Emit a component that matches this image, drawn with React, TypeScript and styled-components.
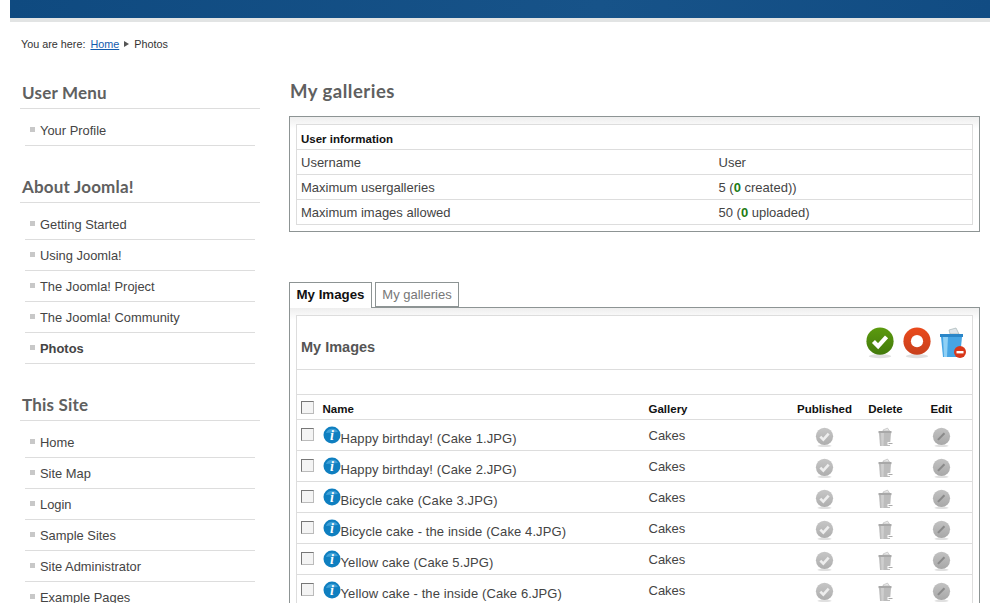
import React from 'react';
import styled, { createGlobalStyle } from 'styled-components';

const Global = createGlobalStyle`
  html, body { margin: 0; padding: 0; background: #fff; height: 603px; overflow: hidden; }
  body { font-family: "Liberation Sans", Arial, sans-serif; font-size: 13px; color: #333; }
`;

const Page = styled.div`
  width: 1000px;
  height: 603px;
  overflow: hidden;
`;

const Banner = styled.div`
  margin: 0 10px;
  height: 18px;
  background: linear-gradient(100deg, #0f4a80 0%, #175389 60%, #114c83 100%);
  border-bottom: 4px solid #e2e4e4;
`;

const Crumbs = styled.div`
  margin: 15px 0 0 21px;
  height: 14px;
  line-height: 14px;
  font-size: 10.8px;
  color: #333;
  display: flex;
  align-items: center;
  a { color: #135cae; margin: 0 5px 0 5px; text-decoration: underline; }
`;

const Arrow = styled.span`
  width: 0;
  height: 0;
  border-left: 5px solid #555;
  border-top: 3.5px solid transparent;
  border-bottom: 3.5px solid transparent;
  margin-right: 5px;
`;

const Columns = styled.div`
  display: flex;
  margin: 20px 20px 0 20px;
  gap: 29px;
`;

const Sidebar = styled.aside`
  width: 240px;
  flex: none;
`;

const Module = styled.section`
  margin-bottom: 19px;
`;

const ModuleTitle = styled.h3`
  margin: 0;
  height: 38px;
  box-sizing: border-box;
  padding: 10px 0 0 2px;
  font: 700 17px/24px Lato, sans-serif;
  letter-spacing: 0.2px;
  color: #606060;
  border-bottom: 1px solid #ddd;
`;

const MenuList = styled.ul`
  list-style: none;
  margin: 0 5px;
  padding: 6px 0 0;
`;

const MenuItem = styled.li<{ $active?: boolean }>`
  height: 30px;
  border-bottom: 1px solid #ddd;
  padding-left: 15px;
  line-height: 32px;
  font-size: 12.9px;
  color: #444;
  font-weight: ${p => (p.$active ? 700 : 400)};
  position: relative;
  &::before {
    content: "";
    position: absolute;
    left: 5px;
    top: 12px;
    width: 5px;
    height: 5px;
    background: #c8c8c8;
  }
`;

const Main = styled.main`
  flex: 1;
  min-width: 0;
`;

const PageTitle = styled.h1`
  margin: 0;
  height: 45px;
  box-sizing: border-box;
  padding: 7px 0 0 1px;
  font: 700 18.5px/26px Lato, sans-serif;
  letter-spacing: 0.5px;
  color: #606060;
`;

const Frame = styled.div`
  border: 1px solid #8d9494;
  padding: 7px 6px 6px 6px;
  background: linear-gradient(#eeeeee, #fff 12px);
`;

const Table = styled.table`
  width: 100%;
  border-collapse: collapse;
  table-layout: fixed;
  background: #fff;
  border: 1px solid #ddd;
  td, th { border-bottom: 1px solid #ddd; padding: 0 0 0 4px; font-size: 13px; text-align: left; }
`;

const InfoRow = styled.tr`
  height: 25px;
  td { color: #444; }
  th { color: #111; font-size: 11.5px; font-weight: 700; padding-top: 3px; }
`;

const Strong = styled.b`
  color: #1c7c14;
`;

const Tabs = styled.div`
  display: flex;
  gap: 3px;
  margin-top: 50px;
  height: 25px;
`;

const Tab = styled.div<{ $active?: boolean }>`
  box-sizing: border-box;
  height: ${p => (p.$active ? 26 : 25)}px;
  width: ${p => (p.$active ? 83 : 84)}px;
  text-align: center;
  line-height: 24px;
  border: 1px solid #8d9494;
  border-bottom: ${p => (p.$active ? 'none' : '1px solid #8d9494')};
  background: #fff;
  font-size: ${p => (p.$active ? 13.3 : 13)}px;
  font-weight: ${p => (p.$active ? 700 : 400)};
  color: ${p => (p.$active ? '#111' : '#777')};
  position: relative;
  z-index: 1;
`;

const TabFrame = styled(Frame)`
  height: 400px;
`;

const ToolRow = styled.tr`
  height: 54px;
`;

const ToolTitle = styled.td`
  && { font-size: 14.5px; font-weight: 700; color: #555; padding-top: 8px; }
`;

const Toolbar = styled.div`
  display: flex;
  justify-content: flex-end;
  gap: 7px;
  padding-right: 5px;
`;

const EmptyRow = styled.tr`
  height: 25px;
`;

const HeadRow = styled.tr`
  height: 25px;
  th { font-size: 11.5px; color: #111; font-weight: 700; padding-top: 3px; }
  th.c { text-align: center; padding: 3px 0 0; }
`;

const ImageRow = styled.tr`
  height: 31px;
  td { color: #444; }
  td.c { text-align: center; padding: 4px 0 0; line-height: 0; }
`;

const Check = styled.span`
  display: inline-block;
  width: 11px;
  height: 11px;
  border: 1px solid #777;
  border-right-color: #bbb;
  border-bottom-color: #bbb;
  background: #f4f4f4;
  vertical-align: middle;
`;

const HeadCheck = styled(Check)`
  margin-top: -3px;
`;

const RowCheck = styled(Check)`
  margin-top: -4px;
`;

const NameCell = styled.div`
  display: flex;
  align-items: flex-start;
  height: 30px;
`;

const NameText = styled.span`
  margin-top: 11px;
  line-height: 15px;
  letter-spacing: 0.1px;
`;

const InfoGlyph = styled.svg`
  margin-top: 6px;
  flex: none;
`;

const GlossCircle = ({ id, top, bottom, children, size }: { id: string; top: string; bottom: string; children: React.ReactNode; size: number }) => (
  <svg width={size} height={size + 2} viewBox="0 0 32 34">
    <defs>
      <linearGradient id={id} x1="0" y1="0" x2="0" y2="1">
        <stop offset="0" stopColor={top} />
        <stop offset="1" stopColor={bottom} />
      </linearGradient>
    </defs>
    <ellipse cx="16" cy="31" rx="12" ry="2.2" fill="#000" opacity="0.12" />
    <circle cx="16" cy="15" r="14.5" fill={`url(#${id})`} />
    {children}
  </svg>
);

const GreenCheck = () => (
  <GlossCircle id="green" size={30} top="#5b9a0e" bottom="#437a0c">
    <path d="M9 15.5l5 5 9-10" fill="none" stroke="#fff" strokeWidth="4.5" />
  </GlossCircle>
);

const RedStop = () => (
  <GlossCircle id="red" size={30} top="#ea4a1c" bottom="#c8401c">
    <circle cx="16" cy="15" r="6.5" fill="#fff" />
  </GlossCircle>
);

const BlueBin = () => (
  <svg width="28" height="32" viewBox="0 0 28 32">
    <path d="M10 3l7-2 3 6h-9z" fill="#dfe6ea" stroke="#9aa" strokeWidth="0.6" />
    <path d="M1 7h23v3H1z" fill="#2a86c8" />
    <path d="M2 10h21l-2 20H4z" fill="#46a5e4" />
    <path d="M4 10h5l-1 20H5z" fill="#8fd0f5" />
    <circle cx="21" cy="25" r="6" fill="#d8371a" />
    <rect x="17.5" y="24" width="7" height="2.4" fill="#fff" />
  </svg>
);

const GrayCheck = ({ id }: { id: string }) => (
  <GlossCircle id={id} size={19} top="#c6c6c6" bottom="#aeaeae">
    <path d="M9 15.5l5 5 9-10" fill="none" stroke="#eee" strokeWidth="4.5" />
  </GlossCircle>
);

const GrayEdit = ({ id }: { id: string }) => (
  <GlossCircle id={id} size={19} top="#c2c2c2" bottom="#a8a8a8">
    <path d="M10 21l11-11" fill="none" stroke="#8a8a8a" strokeWidth="3.5" />
  </GlossCircle>
);

const GrayBin = () => (
  <svg width="16" height="20" viewBox="0 0 16 20">
    <path d="M5 3l4.5-2 2 3H5z" fill="#e8e8e8" stroke="#aaa" strokeWidth="0.5" />
    <path d="M0.5 4h13v2.2h-13z" fill="#a8a8a8" />
    <path d="M1 6h12l-1 13H2z" fill="#bcbcbc" />
    <path d="M3 6h3l-0.5 13H3.5z" fill="#cfcfcf" />
    <path d="M9.5 15h6v3h-6z" fill="#fff" />
    <path d="M10.5 16h4v1h-4z" fill="#aaa" />
  </svg>
);

const InfoIcon = () => (
  <InfoGlyph width="18" height="18" viewBox="0 0 18 18">
    <circle cx="9" cy="9" r="8.5" fill="#0f7fc0" />
    <path d="M3 7a6.5 6 0 0 1 12 -1z" fill="#5db6e6" opacity="0.6" />
    <text x="9" y="14" textAnchor="middle" fontFamily="Liberation Serif, serif" fontStyle="italic" fontWeight="700" fontSize="14" fill="#fff">i</text>
  </InfoGlyph>
);

const sideMenus = [
  { title: 'User Menu', items: ['Your Profile'] },
  { title: 'About Joomla!', items: ['Getting Started', 'Using Joomla!', 'The Joomla! Project', 'The Joomla! Community', 'Photos'] },
  { title: 'This Site', items: ['Home', 'Site Map', 'Login', 'Sample Sites', 'Site Administrator', 'Example Pages'] },
];

const images = [
  'Happy birthday! (Cake 1.JPG)',
  'Happy birthday! (Cake 2.JPG)',
  'Bicycle cake (Cake 3.JPG)',
  'Bicycle cake - the inside (Cake 4.JPG)',
  'Yellow cake (Cake 5.JPG)',
  'Yellow cake - the inside (Cake 6.JPG)',
];

const App = () => (
  <Page>
    <Global />
    <Banner />
    <Crumbs>
      You are here: <a>Home</a>
      <Arrow />
      Photos
    </Crumbs>
    <Columns>
      <Sidebar>
        {sideMenus.map(menu => (
          <Module key={menu.title}>
            <ModuleTitle>{menu.title}</ModuleTitle>
            <MenuList>
              {menu.items.map(item => (
                <MenuItem key={item} $active={item === 'Photos'}>{item}</MenuItem>
              ))}
            </MenuList>
          </Module>
        ))}
      </Sidebar>
      <Main>
        <PageTitle>My galleries</PageTitle>
        <Frame>
          <Table>
            <colgroup>
              <col style={{ width: 418 }} />
              <col />
            </colgroup>
            <tbody>
              <InfoRow><th colSpan={2}>User information</th></InfoRow>
              <InfoRow><td>Username</td><td>User</td></InfoRow>
              <InfoRow><td>Maximum usergalleries</td><td>5 (<Strong>0</Strong> created))</td></InfoRow>
              <InfoRow><td>Maximum images allowed</td><td>50 (<Strong>0</Strong> uploaded)</td></InfoRow>
            </tbody>
          </Table>
        </Frame>
        <Tabs>
          <Tab $active>My Images</Tab>
          <Tab>My galleries</Tab>
        </Tabs>
        <TabFrame>
          <Table>
            <colgroup>
              <col style={{ width: 22 }} />
              <col style={{ width: 326 }} />
              <col style={{ width: 144 }} />
              <col style={{ width: 72 }} />
              <col style={{ width: 50 }} />
              <col />
            </colgroup>
            <tbody>
              <ToolRow>
                <ToolTitle colSpan={3}>My Images</ToolTitle>
                <td colSpan={3}>
                  <Toolbar>
                    <GreenCheck />
                    <RedStop />
                    <BlueBin />
                  </Toolbar>
                </td>
              </ToolRow>
              <EmptyRow><td colSpan={6} /></EmptyRow>
              <HeadRow>
                <th><HeadCheck /></th>
                <th>Name</th>
                <th>Gallery</th>
                <th className="c">Published</th>
                <th className="c">Delete</th>
                <th className="c">Edit</th>
              </HeadRow>
              {images.map((name, i) => (
                <ImageRow key={name}>
                  <td><RowCheck /></td>
                  <td>
                    <NameCell>
                      <InfoIcon />
                      <NameText>{name}</NameText>
                    </NameCell>
                  </td>
                  <td>Cakes</td>
                  <td className="c"><GrayCheck id={`pub${i}`} /></td>
                  <td className="c"><GrayBin /></td>
                  <td className="c"><GrayEdit id={`edit${i}`} /></td>
                </ImageRow>
              ))}
            </tbody>
          </Table>
        </TabFrame>
      </Main>
    </Columns>
  </Page>
);

export default App;
